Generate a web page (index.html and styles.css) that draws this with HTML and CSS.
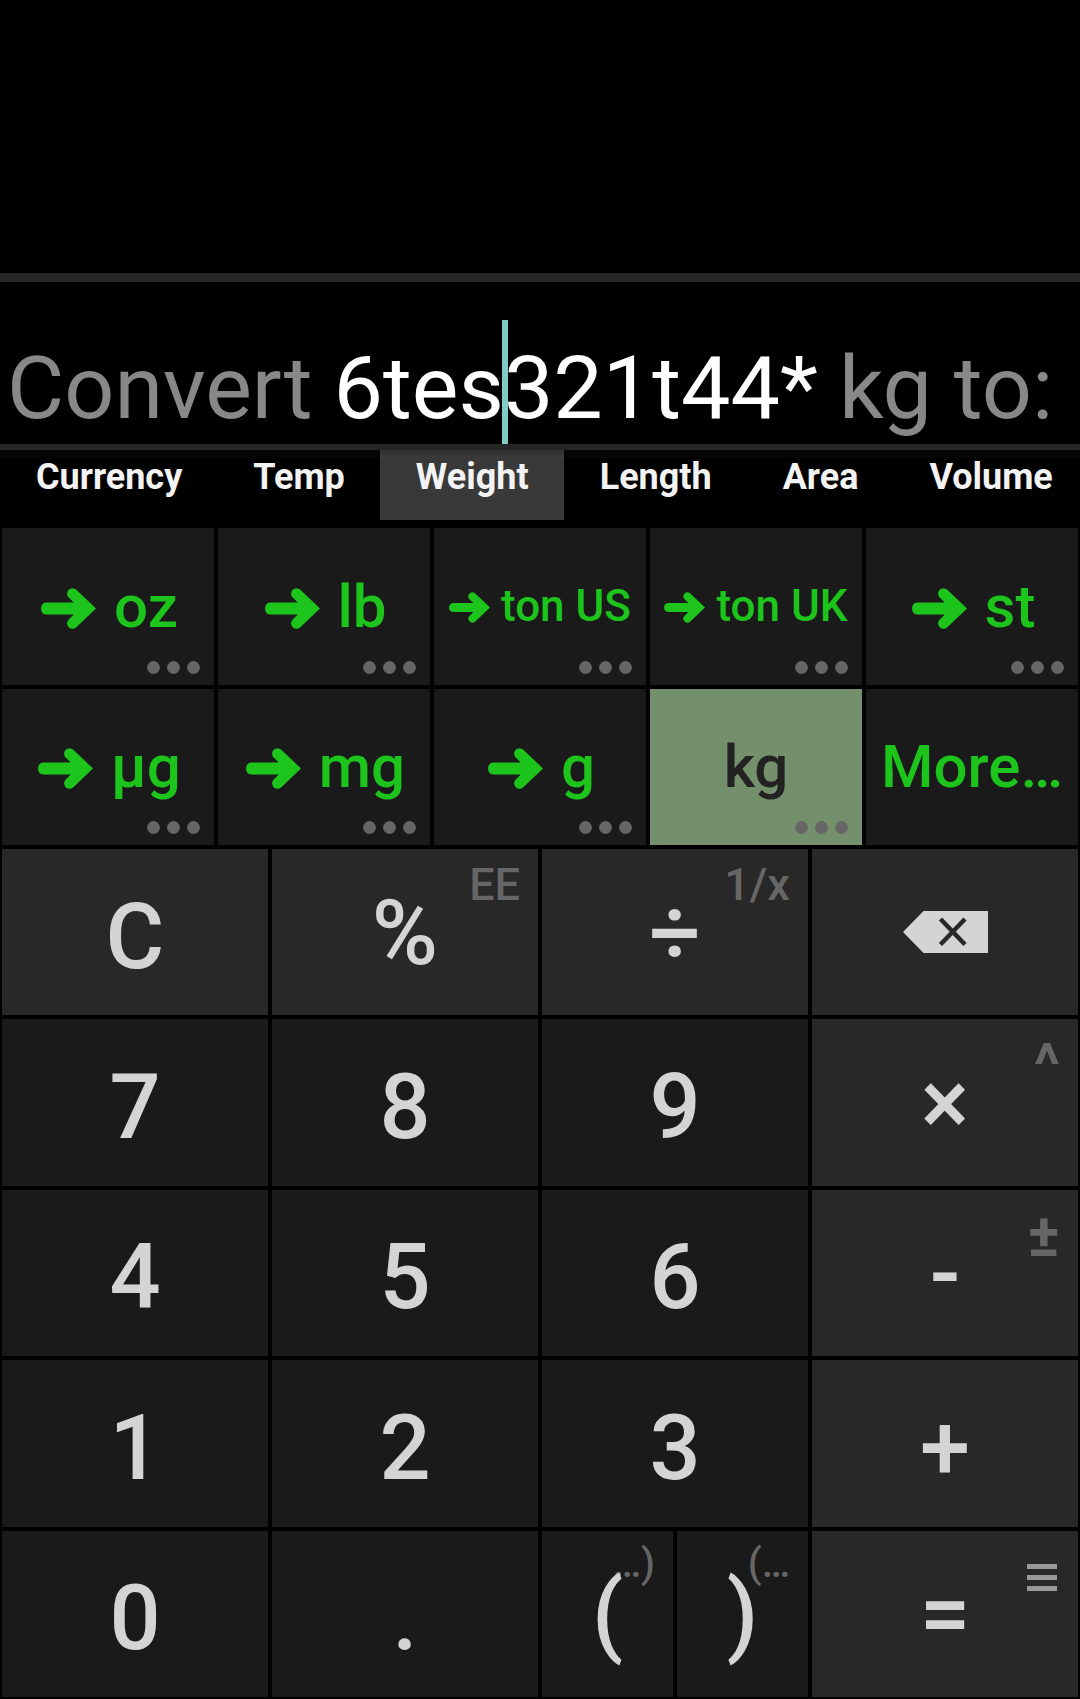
FILE: index.html
```html
<!DOCTYPE html>
<html lang="en">
<head>
<meta charset="utf-8">
<meta name="viewport" content="width=device-width, initial-scale=1">
<title>Unit converter</title>
<link rel="stylesheet" href="styles.css">
</head>
<body>
<svg class="defs" aria-hidden="true">
  <symbol id="arrow" viewBox="0 0 165 122"><path d="M16 43H98L83 28A16 16 0 0 1 106 5L165 61L106 117A16 16 0 0 1 83 94L98 79H16C-5 79-5 43 16 43Z"/></symbol>
  <symbol id="dots" viewBox="0 0 53 13"><circle cx="6.5" cy="6.5" r="6.4"/><circle cx="26.5" cy="6.5" r="6.4"/><circle cx="46.5" cy="6.5" r="6.4"/></symbol>
</svg>
<main class="app">
  <section class="history" aria-label="History"></section>
  <section class="entry">
    <label for="amount">Convert</label>
    <span class="field"><input id="amount" type="text" value="6tes321t44*" autocomplete="off" spellcheck="false"><span class="caret"></span></span>
    <span>kg to:</span>
  </section>
  <nav class="tabs" aria-label="Categories">
    <button class="tab">Currency</button>
    <button class="tab">Temp</button>
    <button class="tab selected" aria-pressed="true">Weight</button>
    <button class="tab">Length</button>
    <button class="tab">Area</button>
    <button class="tab">Volume</button>
  </nav>
  <section class="units" aria-label="Units">
    <button class="unit"><span><svg class="arrow"><use href="#arrow"/></svg> oz</span><svg class="dots"><use href="#dots"/></svg></button>
    <button class="unit"><span><svg class="arrow"><use href="#arrow"/></svg> lb</span><svg class="dots"><use href="#dots"/></svg></button>
    <button class="unit long"><span><svg class="arrow"><use href="#arrow"/></svg> ton US</span><svg class="dots"><use href="#dots"/></svg></button>
    <button class="unit long"><span><svg class="arrow"><use href="#arrow"/></svg> ton UK</span><svg class="dots"><use href="#dots"/></svg></button>
    <button class="unit"><span><svg class="arrow"><use href="#arrow"/></svg> st</span><svg class="dots"><use href="#dots"/></svg></button>
    <button class="unit"><span><svg class="arrow"><use href="#arrow"/></svg> µg</span><svg class="dots"><use href="#dots"/></svg></button>
    <button class="unit"><span><svg class="arrow"><use href="#arrow"/></svg> mg</span><svg class="dots"><use href="#dots"/></svg></button>
    <button class="unit"><span><svg class="arrow"><use href="#arrow"/></svg> g</span><svg class="dots"><use href="#dots"/></svg></button>
    <button class="unit current" aria-pressed="true"><span>kg</span><svg class="dots"><use href="#dots"/></svg></button>
    <button class="unit"><span>More…</span></button>
  </section>
  <section class="keypad" aria-label="Keypad">
    <button class="key op"><span class="main">C</span></button>
    <button class="key op sign"><span class="hint">EE</span><span class="main">%</span></button>
    <button class="key op sign"><span class="hint">1/x</span><span class="main">÷</span></button>
    <button class="key op icon" aria-label="Backspace"><svg class="backspace" viewBox="0 0 85 42"><path fill="#d4d4d4" d="M0 21L20.500 0H85V42H20.500Z"/><path stroke="#282828" stroke-width="4.500" d="M37.500 8L62 33.500M62 8L37.500 33.500"/></svg></button>
    <button class="key"><span class="main">7</span></button>
    <button class="key"><span class="main">8</span></button>
    <button class="key"><span class="main">9</span></button>
    <button class="key op sign"><span class="hint symbol">^</span><span class="main">×</span></button>
    <button class="key"><span class="main">4</span></button>
    <button class="key"><span class="main">5</span></button>
    <button class="key"><span class="main">6</span></button>
    <button class="key op sign"><span class="hint symbol">±</span><span class="main">-</span></button>
    <button class="key"><span class="main">1</span></button>
    <button class="key"><span class="main">2</span></button>
    <button class="key"><span class="main">3</span></button>
    <button class="key op"><span class="main">+</span></button>
    <button class="key"><span class="main">0</span></button>
    <button class="key"><span class="main">.</span></button>
    <div class="pair">
      <button class="key sign"><span class="hint paren">…)</span><span class="main">(</span></button>
      <button class="key sign"><span class="hint paren">(…</span><span class="main">)</span></button>
    </div>
    <button class="key op sign"><svg class="menu" viewBox="0 0 30 27"><path fill="#999" d="M0 0H30V5H0ZM0 11H30V16H0ZM0 22H30V27H0Z"/></svg><span class="main">=</span></button>
  </section>
</main>
</body>
</html>
```
FILE: styles.css
```css
* { box-sizing: border-box; }

body {
  margin: 0;
  background: #000;
  font-family: Roboto, "Liberation Sans", sans-serif;
}

button {
  margin: 0;
  padding: 0;
  border: 0;
  background: none;
  color: inherit;
  font: inherit;
}

.defs {
  position: absolute;
  width: 0;
  height: 0;
}

.app {
  display: flex;
  flex-direction: column;
  min-height: 100vh;
}

.history { height: 273px; }

.entry {
  display: flex;
  align-items: flex-end;
  gap: 21px;
  height: 177px;
  padding: 0 7px 4px;
  border-top: 9px solid #262626;
  border-bottom: 6px solid #262626;
  color: #888;
  font-size: 88px;
  line-height: 104px;
  white-space: nowrap;
}

.field {
  position: relative;
  display: flex;
}

.field input {
  field-sizing: content;
  height: 104px;
  padding: 0;
  border: 0;
  outline: 0;
  background: none;
  color: #fff;
  font: inherit;
}

.caret {
  position: absolute;
  left: 168px;
  bottom: -4px;
  width: 6px;
  height: 124px;
  background: #80cbc4;
  z-index: -1;
}

.tabs {
  display: flex;
  overflow: hidden;
  height: 76px;
  align-items: flex-start;
  background: linear-gradient(#050505 8px, #000 8px);
}

.tab {
  flex: none;
  padding: 6px 35px 22px 36px;
  color: #f3f3f3;
  font-size: 36px;
  font-weight: 700;
  line-height: 42px;
}

.tab.selected { background: linear-gradient(#323232 4px, #393939 4px); }

.units,
.keypad {
  display: grid;
  grid-auto-rows: 1fr;
  gap: 4px;
  padding: 2px;
}

.units {
  flex: 317 1 0;
  grid-template-columns: repeat(5, 1fr);
}

.unit {
  position: relative;
  background: #1a1a1a;
  color: #1cc41c;
  font-size: 60px;
  font-weight: 500;
  white-space: nowrap;
}

.unit.long { font-size: 44px; }

.unit.current {
  background: #748f6b;
  color: #222;
}

.arrow {
  width: 55px;
  height: 41px;
  margin: 0 3px;
  fill: currentColor;
  vertical-align: -2px;
}

.long .arrow {
  width: 41px;
  height: 31px;
  margin: 0;
}

.dots {
  position: absolute;
  right: 14px;
  bottom: 11px;
  width: 53px;
  height: 13px;
  fill: #666;
}

.keypad {
  flex: 848 1 0;
  grid-template-columns: repeat(4, 1fr);
}

.key {
  position: relative;
  padding-top: 10px;
  background: #1a1a1a;
  color: #d4d4d4;
  font-size: 90px;
  font-weight: 500;
}

.key.op { background: #282828; }

.key.sign { padding-top: 2px; }

.key.icon { padding-top: 0; }

.key .main { position: relative; }

.pair {
  display: grid;
  grid-template-columns: 1fr 1fr;
  gap: 4px;
}

.hint {
  position: absolute;
  top: 9px;
  right: 18px;
  color: #666;
  font-size: 45px;
}

.hint.symbol {
  top: 10px;
  font-size: 60px;
  font-weight: 700;
}

.hint.paren { font-size: 40px; }

.backspace {
  display: block;
  width: 85px;
  height: 42px;
  margin: 0 auto;
}

.menu {
  position: absolute;
  top: 33px;
  right: 21px;
  width: 30px;
  height: 27px;
}
```
